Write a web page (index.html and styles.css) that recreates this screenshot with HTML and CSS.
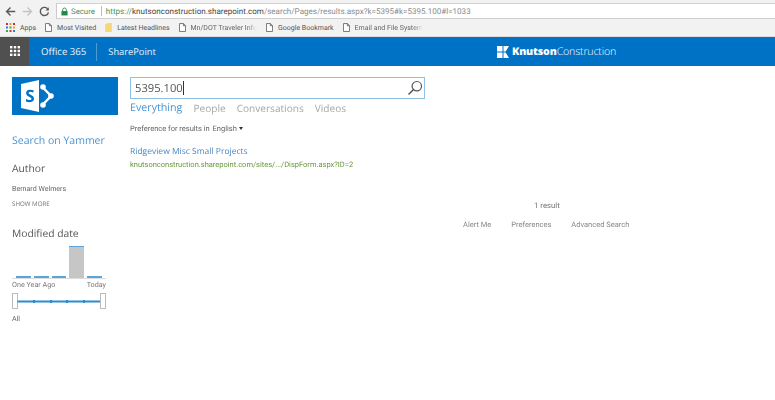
FILE: index.html
```html
<!DOCTYPE html>
<html lang="en">
<head>
<meta charset="utf-8">
<title>Search</title>
<link rel="stylesheet" href="styles.css">
</head>
<body>
<div class="toolbar">
  <svg class="nav" width="11" height="11" viewBox="0 0 14 14"><path d="M13 7H2M7 2L2 7l5 5" fill="none" stroke="#5a5a5a" stroke-width="1.800"/></svg>
  <svg class="nav" width="11" height="11" viewBox="0 0 14 14"><path d="M1 7h11M7 2l5 5-5 5" fill="none" stroke="#c4c4c4" stroke-width="1.800"/></svg>
  <svg class="nav" width="11" height="11" viewBox="0 0 14 14"><path d="M11.500 4.500A5.200 5.200 0 1 0 12 8" fill="none" stroke="#5a5a5a" stroke-width="1.800"/><path d="M12.500 1.500v4.200H8.300z" fill="#5a5a5a"/></svg>
  <div class="omnibox">
    <svg class="lock" width="7" height="9" viewBox="0 0 8 10"><path d="M2 5V3a2 2 0 0 1 4 0v2" fill="none" stroke="#1e8a4a" stroke-width="1"/><rect x="0.500" y="4.500" width="7" height="5" fill="#1e8a4a"/></svg>
    <span class="secure">Secure</span>
    <span class="sep"></span>
    <span class="url"><span class="https">https://</span><span class="host">knutsonconstruction.sharepoint.com</span>/search/Pages/results.aspx?k=5395#k=5395.100#l=1033</span>
  </div>
</div>
<div class="bookmarks">
  <span class="mark">
    <svg class="apps" width="9" height="9" viewBox="0 0 9 9"><g><rect width="2" height="2" fill="#d93025"/><rect x="3.500" width="2" height="2" fill="#e8a020"/><rect x="7" width="2" height="2" fill="#d93025"/><rect y="3.500" width="2" height="2" fill="#2a7de1"/><rect x="3.500" y="3.500" width="2" height="2" fill="#34a853"/><rect x="7" y="3.500" width="2" height="2" fill="#e8a020"/><rect y="7" width="2" height="2" fill="#34a853"/><rect x="3.500" y="7" width="2" height="2" fill="#d93025"/><rect x="7" y="7" width="2" height="2" fill="#2a7de1"/></g></svg>
    Apps
  </span>
  <span class="mark"><svg width="7" height="9" viewBox="0 0 8 10"><path d="M.5.5h4.500l2.500 2.500v6.500h-7zM5 .5V3h2.500" fill="#fff" stroke="#666"/></svg>Most Visited</span>
  <span class="mark"><svg width="7" height="9" viewBox="0 0 8 11"><path d="M0 1h2l1-1h5v11H0z" fill="#f6d675"/></svg>Latest Headlines</span>
  <span class="mark"><svg width="7" height="9" viewBox="0 0 8 10"><path d="M.5.5h4.500l2.500 2.500v6.500h-7zM5 .5V3h2.500" fill="#fff" stroke="#666"/></svg><span class="fade">Mn/DOT Traveler Info</span></span>
  <span class="mark"><svg width="7" height="9" viewBox="0 0 8 10"><path d="M.5.5h4.500l2.500 2.500v6.500h-7zM5 .5V3h2.500" fill="#fff" stroke="#666"/></svg>Google Bookmark</span>
  <span class="mark"><svg width="7" height="9" viewBox="0 0 8 10"><path d="M.5.5h4.500l2.500 2.500v6.500h-7zM5 .5V3h2.500" fill="#fff" stroke="#666"/></svg><span class="fade">Email and File System</span></span>
</div>
<header class="suite">
  <div class="waffle">
    <svg width="10" height="10" viewBox="0 0 10 10" fill="#fff"><rect width="2.400" height="2.400"/><rect x="3.800" width="2.400" height="2.400"/><rect x="7.600" width="2.400" height="2.400"/><rect y="3.800" width="2.400" height="2.400"/><rect x="3.800" y="3.800" width="2.400" height="2.400"/><rect x="7.600" y="3.800" width="2.400" height="2.400"/><rect y="7.600" width="2.400" height="2.400"/><rect x="3.800" y="7.600" width="2.400" height="2.400"/><rect x="7.600" y="7.600" width="2.400" height="2.400"/></svg>
  </div>
  <span class="o365">Office 365</span>
  <span class="suite-sep"></span>
  <span class="sp">SharePoint</span>
  <div class="brand">
    <svg width="12" height="12" viewBox="0 0 12 12" fill="#fff"><rect width="5.500" height="5.500"/><rect y="6.500" width="5.500" height="5.500"/><path d="M6.500 0H12L8.700 5.500H6.500zM6.500 6.500h2.200L12 12H6.500z"/></svg>
    <span class="brand-name"><b>Knutson</b>Construction</span>
  </div>
</header>
<div class="page">
  <aside class="side">
    <div class="logo">
      <svg width="33" height="32" viewBox="0 0 33 32"><path d="M0 4L18 0v32L0 28z" fill="#fff"/><path d="M21 6.500l9 9.500-9 9.500" fill="none" stroke="#fff" stroke-width="2.500"/><circle cx="22" cy="7" r="2.800" fill="#fff"/><circle cx="30" cy="16" r="2.800" fill="#fff"/><circle cx="22" cy="25" r="2.800" fill="#fff"/><text x="9" y="22" class="logo-s">S</text></svg>
    </div>
    <a class="yammer">Search on Yammer</a>
    <h2 class="refine refine-author">Author</h2>
    <div class="small">Bernard Welmers</div>
    <div class="more">SHOW MORE</div>
    <h2 class="refine refine-date">Modified date</h2>
    <div class="hist">
      <span class="bar"></span><span class="bar"></span><span class="bar"></span><span class="bar tall"></span><span class="bar"></span>
    </div>
    <div class="range"><span>One Year Ago</span><span>Today</span></div>
    <div class="slider">
      <span class="handle"></span>
      <div class="track"><i></i><i></i><i></i><i></i></div>
      <span class="handle"></span>
    </div>
    <div class="small all">All</div>
  </aside>
  <main class="main">
    <div class="search">
      <span class="query">5395.100<span class="caret"></span></span>
      <svg width="16" height="16" viewBox="0 0 16 16"><circle cx="9.800" cy="6.200" r="4.700" fill="none" stroke="#555" stroke-width="1.200"/><path d="M6.300 9.700L1.500 14.500" stroke="#555" stroke-width="1.500"/></svg>
    </div>
    <nav class="tabs"><a class="active">Everything</a><a>People</a><a>Conversations</a><a>Videos</a></nav>
    <div class="pref">Preference for results in <span class="lang">English</span><span class="arrow"></span></div>
    <a class="title">Ridgeview Misc Small Projects</a>
    <div class="path">knutsonconstruction.sharepoint.com/sites/.../DispForm.aspx?ID=2</div>
    <div class="count">1 result</div>
    <div class="links"><a>Alert Me</a><a>Preferences</a><a>Advanced Search</a></div>
  </main>
</div>
</body>
</html>
```
FILE: styles.css
```css
* { box-sizing: border-box; }
html, body { margin: 0; padding: 0; }
body {
  width: 775px;
  height: 400px;
  overflow: hidden;
  background: #fff;
  font-family: "Open Sans", "Noto Sans", sans-serif;
  color: #444;
  text-rendering: geometricPrecision;
  filter: blur(0.35px);
}
.toolbar {
  height: 19px;
  background: #f2f2f2;
  display: flex;
  align-items: center;
  padding: 3px 0 0 5px;
  gap: 6px;
}
.nav { flex: none; }
.omnibox {
  flex: 1;
  height: 16px;
  background: #fff;
  border-top: 1px solid #d4d4d4;
  border-bottom: 1px solid #d0d0d0;
  border-left: 1px solid #ccc;
  display: flex;
  align-items: center;
  padding-left: 4px;
  font-family: Roboto, sans-serif;
  white-space: nowrap;
  overflow: hidden;
}
.secure { color: #3f9468; margin-left: 3px; font-size: 7.800px; }
.sep { width: 1px; height: 10px; background: #bbb; margin: 0 4px 0 6px; }
.url { color: #8b8b8b; font-size: 8.050px; }
.https { color: #3f9468; }
.host { color: #444; }
.bookmarks {
  height: 18px;
  background: #f2f2f2;
  border-bottom: 1px solid #dcdcdc;
  display: flex;
  align-items: center;
  padding-left: 6px;
  gap: 9px;
  font-family: Roboto, sans-serif;
  font-size: 7px;
  color: #555;
  white-space: nowrap;
}
.mark { display: flex; align-items: center; gap: 5px; }
.fade { color: #666; mask-image: linear-gradient(to right, #000 85%, transparent); }
.suite {
  height: 29px;
  background: #0072c6;
  display: flex;
  align-items: center;
  color: #fff;
  position: relative;
}
.waffle {
  width: 29px;
  height: 29px;
  background: #505050;
  display: flex;
  align-items: center;
  justify-content: center;
  padding-bottom: 2px;
}
.o365 { font-size: 9.600px; margin-left: 12px; color: #e8f2fa; }
.suite-sep { width: 1px; height: 18px; background: #4d9cd6; margin: 0 11px 0 10px; }
.sp { font-size: 9.300px; color: #e8f2fa; }
.brand {
  position: absolute;
  left: 497px;
  top: 9px;
  display: flex;
  align-items: center;
  gap: 3px;
}
.brand-name { font-size: 10.600px; letter-spacing: -0.150px; font-weight: 300; line-height: 12px; }
.brand-name b { font-weight: 800; }
.page { display: flex; padding: 11px 0 0 12px; }
.side { width: 94px; flex: none; }
.logo {
  width: 106px;
  height: 38px;
  background: #0072c6;
  display: flex;
  align-items: center;
  padding-left: 9px;
}
.logo-s { font-family: "Open Sans", sans-serif; font-size: 17px; font-weight: 700; fill: #0072c6; text-anchor: middle; }
.yammer { display: block; margin-top: 18px; font-size: 10.500px; line-height: 16px; color: #4a94d4; white-space: nowrap; }
.refine { font-weight: 400; font-size: 10.300px; line-height: 16px; margin: 0; color: #555; }
.refine-author { margin-top: 12px; }
.small { font-family: Roboto, sans-serif; font-size: 7.100px; line-height: 11px; color: #666; margin-top: 6px; }
.more { font-size: 6.200px; line-height: 10px; margin-top: 5px; color: #777; }
.refine-date { margin-top: 17px; }
.hist {
  height: 32px;
  margin-top: 5px;
  padding: 0 4px;
  border-bottom: 1px solid #ddd;
  display: flex;
  align-items: flex-end;
  gap: 3px;
}
.bar { flex: 1; height: 2px; background: #5aa5dc; }
.tall { flex: 1; height: 32px; background: #c6c6c6; border-top: 1px solid #5aa5dc; }
.range { display: flex; justify-content: space-between; font-family: Roboto, sans-serif; font-size: 7.200px; line-height: 10px; margin-top: 1px; color: #777; white-space: nowrap; }
.slider { display: flex; align-items: center; margin-top: 3px; height: 16px; }
.handle { width: 6px; height: 16px; border: 1px solid #bbb; background: #fff; flex: none; }
.track { flex: 1; height: 1px; background: #2b8ad0; box-shadow: 0 0 0 .5px #2b8ad0; display: flex; justify-content: space-evenly; align-items: center; }
.track i { width: 2px; height: 3px; background: #2b8ad0; }
.all { margin-top: 4px; }
.main { width: 500px; margin-left: 24px; }
.search {
  width: 295px;
  height: 22px;
  border: 1px solid #8fc1e6;
  display: flex;
  align-items: center;
  justify-content: space-between;
  padding: 0 1px 0 4px;
}
.query { font-size: 11.200px; color: #555; display: flex; align-items: center; }
.caret { width: 1px; height: 14px; background: #333; }
.tabs { display: flex; gap: 11px; font-size: 10.100px; line-height: 16px; margin-top: 1px; color: #a8a8a8; }
.tabs a.active { color: #4a94d4; font-size: 10.700px; }
.pref { font-family: Roboto, sans-serif; font-size: 7.500px; line-height: 11px; margin-top: 7px; color: #666; display: flex; align-items: center; white-space: pre; }
.lang { margin-left: 1px; }
.arrow { width: 0; height: 0; border: 2.500px solid transparent; border-top: 3px solid #333; border-bottom: 0; margin-left: 2px; }
.title { display: block; font-size: 8.500px; line-height: 12px; margin-top: 12px; color: #4a86c4; }
.path { font-family: Roboto, sans-serif; font-size: 7.500px; line-height: 11px; margin-top: 1px; color: #6a9a3c; white-space: nowrap; }
.count { width: 500px; padding-left: 404px; font-family: Roboto, sans-serif; font-size: 7.800px; line-height: 11px; margin-top: 30px; color: #777; }
.links { display: flex; gap: 20px; padding-left: 333px; font-family: Roboto, sans-serif; font-size: 7.500px; line-height: 11px; margin-top: 8px; color: #888; white-space: nowrap; }
```
